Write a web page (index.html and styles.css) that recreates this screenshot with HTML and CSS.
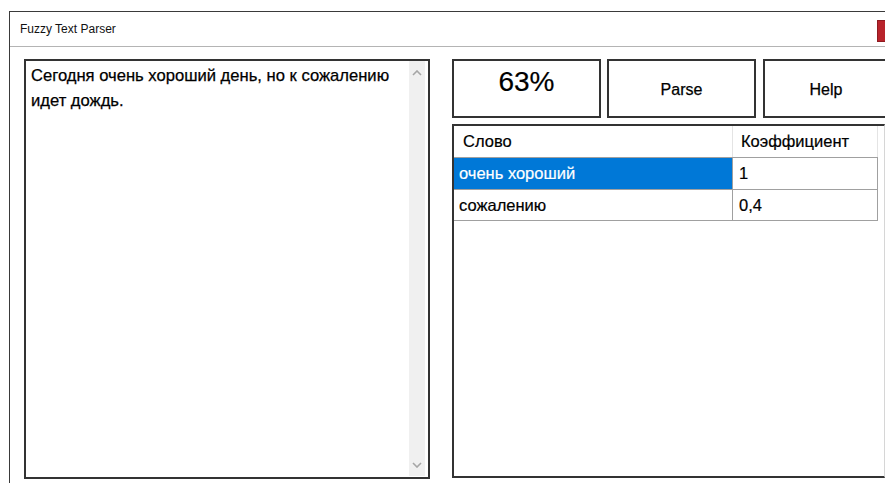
FILE: index.html
```html
<!DOCTYPE html>
<html lang="ru">
<head>
<meta charset="utf-8">
<title>Fuzzy Text Parser</title>
<link rel="stylesheet" href="styles.css">
</head>
<body>
<div class="window">
  <div class="titlebar">
    <span class="title">Fuzzy Text Parser</span>
    <span class="close"></span>
  </div>
  <div class="client">
    <div class="textbox">
      <div class="textbox-text">Сегодня очень хороший день, но к сожалению идет дождь.</div>
      <div class="vscroll">
        <svg class="arrow" width="10" height="6" viewBox="0 0 10 6"><path d="M1 5 L5 1 L9 5" fill="none" stroke="#a6a6a6" stroke-width="1.6"/></svg>
        <svg class="arrow" width="10" height="6" viewBox="0 0 10 6"><path d="M1 1 L5 5 L9 1" fill="none" stroke="#a6a6a6" stroke-width="1.6"/></svg>
      </div>
    </div>
    <div class="side">
      <div class="buttons">
        <div class="btn score">63%</div>
        <div class="btn">Parse</div>
        <div class="btn help">Help</div>
      </div>
      <div class="grid">
        <div class="row header">
          <div class="cell c1">Слово</div>
          <div class="cell c2">Коэффициент</div>
        </div>
        <div class="row">
          <div class="cell c1 selected">очень хороший</div>
          <div class="cell c2">1</div>
        </div>
        <div class="row last">
          <div class="cell c1">сожалению</div>
          <div class="cell c2">0,4</div>
        </div>
      </div>
    </div>
  </div>
</div>
</body>
</html>
```

FILE: styles.css
```css
html, body {
  margin: 0;
  padding: 0;
  background: #ffffff;
  overflow: hidden;
}

body {
  width: 885px;
  height: 483px;
  font-family: "Liberation Sans", Arial, sans-serif;
  color: #000;
}

.window {
  margin: 11px 0 0 9px;
  border-top: 1px solid #3a3a3a;
  border-left: 1px solid #3a3a3a;
  height: 472px;
  box-sizing: border-box;
  display: flex;
  flex-direction: column;
}

.titlebar {
  height: 34px;
  border-bottom: 1px solid #b4b4b4;
  display: flex;
  align-items: flex-start;
  padding-left: 10px;
  flex: none;
}

.title {
  font-size: 12px;
  color: #111;
  flex: 1;
  line-height: 34px;
}

.close {
  width: 8px;
  height: 22px;
  margin-top: 8px;
  background: #b8232b;
  border: 1px solid #8e1a20;
  border-right: none;
  box-sizing: border-box;
}

.client {
  flex: 1;
  display: flex;
  padding: 12px 0 0 14px;
  gap: 22px;
  min-height: 0;
}

.textbox {
  width: 406px;
  height: 420px;
  border: 2px solid #333;
  box-sizing: border-box;
  display: flex;
  flex: none;
}

.textbox-text {
  flex: 1;
  padding: 2px 6px 0 5px;
  font-size: 16.6px;
  line-height: 25px;
  -webkit-text-stroke: 0.25px #000;
}

.vscroll {
  width: 16px;
  margin: 0 3px 1px 0;
  background: #f0f0f0;
  display: flex;
  flex-direction: column;
  justify-content: space-between;
  align-items: center;
  padding: 9px 0 8px;
}

.arrow {
  display: block;
}

.side {
  display: flex;
  flex-direction: column;
  gap: 6px;
  width: 433px;
  flex: none;
}

.buttons {
  display: flex;
  gap: 6px;
  height: 59px;
}

.btn {
  width: 149px;
  flex: none;
  border: 2px solid #333;
  box-sizing: border-box;
  display: flex;
  align-items: center;
  justify-content: center;
  font-size: 16px;
  padding-top: 2px;
  -webkit-text-stroke: 0.25px #000;
}

.help {
  width: 124px;
  margin-left: 1px;
  border-right: none;
}

.score {
  font-size: 28px;
  align-items: flex-start;
  padding-top: 5px;
  -webkit-text-stroke: 0.2px #000;
}

.grid {
  height: 354px;
  border: 2px solid #333;
  border-right: 1px solid #d6d6d6;
  box-sizing: border-box;
}

.row {
  display: flex;
  height: 31px;
  border-bottom: 1px solid #a0a0a0;
  width: 424px;
}

.row.last {
  height: 30px;
}

.cell {
  display: flex;
  align-items: center;
  font-size: 16.5px;
  box-sizing: border-box;
  -webkit-text-stroke: 0.2px currentColor;
}

.c1 {
  width: 279px;
  padding-left: 5px;
  border-right: 1px solid #a0a0a0;
}

.c2 {
  flex: 1;
  padding-left: 6px;
  border-right: 1px solid #a0a0a0;
}

.header .cell {
  border-right-color: #e4e4e4;
}

.header .c1 {
  padding-left: 9px;
}

.header .c2 {
  padding-left: 8px;
}

.selected {
  background: #0078d7;
  color: #fff;
}
```
